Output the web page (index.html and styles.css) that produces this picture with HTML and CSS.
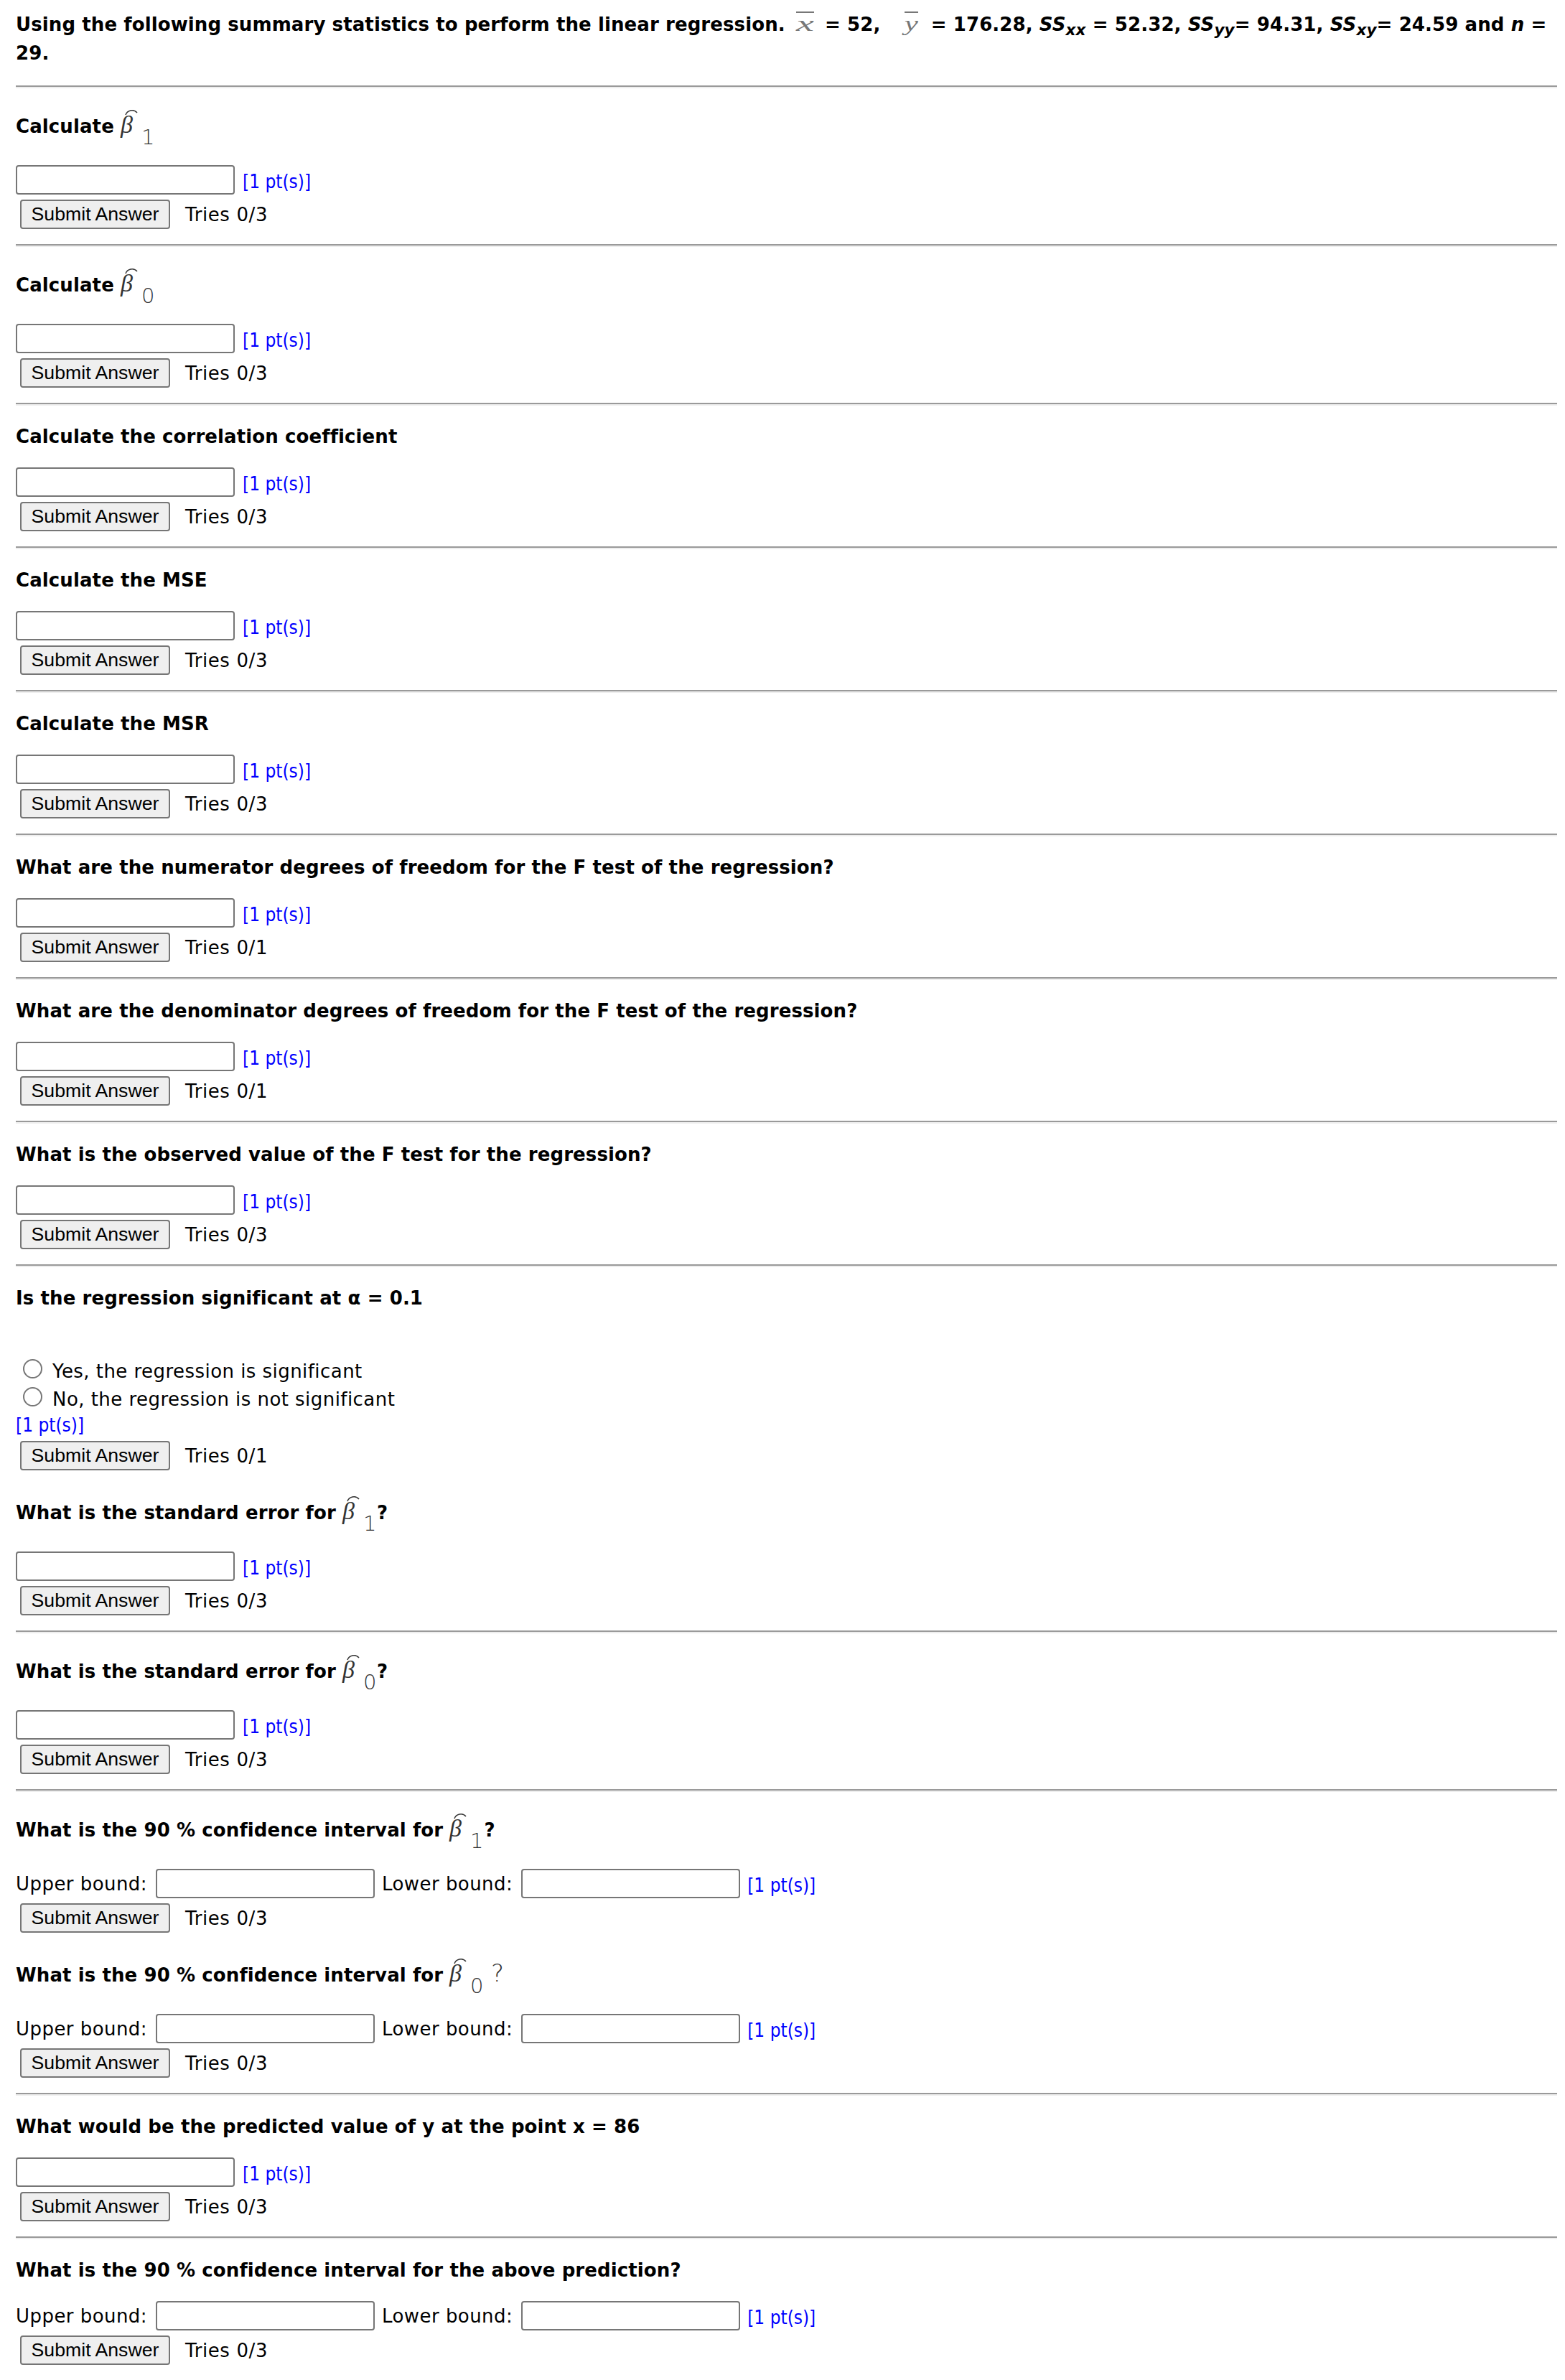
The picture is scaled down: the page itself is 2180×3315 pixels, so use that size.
FILE: index.html
```html
<!DOCTYPE html>
<html lang="en">
<head>
    <meta charset="UTF-8">
    <title>Linear Regression Homework</title>
    <link rel="stylesheet" href="styles.css">
</head>
<body>
<div class="page">
    <p class="intro">Using the following summary statistics to perform the linear regression. <svg class="bar-var" width="37" height="36" viewBox="0 0 37 36"><line x1="6" y1="2" x2="31" y2="2"/><text x="6" y="28" textLength="25" lengthAdjust="spacingAndGlyphs">x</text></svg> = 52, <svg class="bar-var" width="52" height="36" viewBox="0 0 52 36"><line x1="24" y1="2" x2="43" y2="2"/><text x="24" y="28" textLength="19" lengthAdjust="spacingAndGlyphs">y</text></svg> = 176.28, <i>SS</i><sub><i>xx</i></sub> = 52.32, <i>SS</i><sub><i>yy</i></sub>= 94.31, <i>SS</i><sub><i>xy</i></sub>= 24.59 and <i>n</i> = 29.</p>
    <hr>

    <div class="question">
        <p class="prompt">Calculate <svg class="beta" width="48" height="51" viewBox="0 0 48 51"><path d="M7 9 C9 3 18 0 23 6"/><text class="beta-glyph" x="0" y="34">β</text><text class="beta-sub" x="29" y="50">1</text></svg></p>
        <div class="answer"><input type="text"><span class="pts">[1 pt(s)]</span></div>
        <div class="submit"><button>Submit Answer</button><span class="tries">Tries 0/3</span></div>
    </div>
    <hr>

    <div class="question">
        <p class="prompt">Calculate <svg class="beta" width="48" height="51" viewBox="0 0 48 51"><path d="M7 9 C9 3 18 0 23 6"/><text class="beta-glyph" x="0" y="34">β</text><text class="beta-sub" x="29" y="50">0</text></svg></p>
        <div class="answer"><input type="text"><span class="pts">[1 pt(s)]</span></div>
        <div class="submit"><button>Submit Answer</button><span class="tries">Tries 0/3</span></div>
    </div>
    <hr>

    <div class="question">
        <p class="prompt">Calculate the correlation coefficient</p>
        <div class="answer"><input type="text"><span class="pts">[1 pt(s)]</span></div>
        <div class="submit"><button>Submit Answer</button><span class="tries">Tries 0/3</span></div>
    </div>
    <hr>

    <div class="question">
        <p class="prompt">Calculate the MSE</p>
        <div class="answer"><input type="text"><span class="pts">[1 pt(s)]</span></div>
        <div class="submit"><button>Submit Answer</button><span class="tries">Tries 0/3</span></div>
    </div>
    <hr>

    <div class="question">
        <p class="prompt">Calculate the MSR</p>
        <div class="answer"><input type="text"><span class="pts">[1 pt(s)]</span></div>
        <div class="submit"><button>Submit Answer</button><span class="tries">Tries 0/3</span></div>
    </div>
    <hr>

    <div class="question">
        <p class="prompt">What are the numerator degrees of freedom for the F test of the regression?</p>
        <div class="answer"><input type="text"><span class="pts">[1 pt(s)]</span></div>
        <div class="submit"><button>Submit Answer</button><span class="tries">Tries 0/1</span></div>
    </div>
    <hr>

    <div class="question">
        <p class="prompt">What are the denominator degrees of freedom for the F test of the regression?</p>
        <div class="answer"><input type="text"><span class="pts">[1 pt(s)]</span></div>
        <div class="submit"><button>Submit Answer</button><span class="tries">Tries 0/1</span></div>
    </div>
    <hr>

    <div class="question">
        <p class="prompt">What is the observed value of the F test for the regression?</p>
        <div class="answer"><input type="text"><span class="pts">[1 pt(s)]</span></div>
        <div class="submit"><button>Submit Answer</button><span class="tries">Tries 0/3</span></div>
    </div>
    <hr>

    <div class="question open">
        <p class="prompt">Is the regression significant at α = 0.1</p>
        <div class="choices">
            <label class="choice"><input type="radio" name="sig">Yes, the regression is significant</label>
            <label class="choice"><input type="radio" name="sig">No, the regression is not significant</label>
        </div>
        <div class="pts pts-line">[1 pt(s)]</div>
        <div class="submit"><button>Submit Answer</button><span class="tries">Tries 0/1</span></div>
    </div>

    <div class="question">
        <p class="prompt">What is the standard error for <svg class="beta" width="48" height="51" viewBox="0 0 48 51"><path d="M7 9 C9 3 18 0 23 6"/><text class="beta-glyph" x="0" y="34">β</text><text class="beta-sub" x="29" y="50">1</text></svg>?</p>
        <div class="answer"><input type="text"><span class="pts">[1 pt(s)]</span></div>
        <div class="submit"><button>Submit Answer</button><span class="tries">Tries 0/3</span></div>
    </div>
    <hr>

    <div class="question">
        <p class="prompt">What is the standard error for <svg class="beta" width="48" height="51" viewBox="0 0 48 51"><path d="M7 9 C9 3 18 0 23 6"/><text class="beta-glyph" x="0" y="34">β</text><text class="beta-sub" x="29" y="50">0</text></svg>?</p>
        <div class="answer"><input type="text"><span class="pts">[1 pt(s)]</span></div>
        <div class="submit"><button>Submit Answer</button><span class="tries">Tries 0/3</span></div>
    </div>
    <hr>

    <div class="question open">
        <p class="prompt">What is the 90 % confidence interval for <svg class="beta" width="48" height="51" viewBox="0 0 48 51"><path d="M7 9 C9 3 18 0 23 6"/><text class="beta-glyph" x="0" y="34">β</text><text class="beta-sub" x="29" y="50">1</text></svg>?</p>
        <div class="answer bounds">
            <span class="label">Upper bound:</span><input type="text">
            <span class="label">Lower bound:</span><input type="text">
            <span class="pts">[1 pt(s)]</span>
        </div>
        <div class="submit"><button>Submit Answer</button><span class="tries">Tries 0/3</span></div>
    </div>

    <div class="question">
        <p class="prompt">What is the 90 % confidence interval for <svg class="beta" width="80" height="51" viewBox="0 0 80 51"><path d="M7 9 C9 3 18 0 23 6"/><text class="beta-glyph" x="0" y="34">β</text><text class="beta-sub" x="29" y="50">0</text><text class="beta-mark" x="58" y="34">?</text></svg></p>
        <div class="answer bounds">
            <span class="label">Upper bound:</span><input type="text">
            <span class="label">Lower bound:</span><input type="text">
            <span class="pts">[1 pt(s)]</span>
        </div>
        <div class="submit"><button>Submit Answer</button><span class="tries">Tries 0/3</span></div>
    </div>
    <hr>

    <div class="question">
        <p class="prompt">What would be the predicted value of y at the point x = 86</p>
        <div class="answer"><input type="text"><span class="pts">[1 pt(s)]</span></div>
        <div class="submit"><button>Submit Answer</button><span class="tries">Tries 0/3</span></div>
    </div>
    <hr>

    <div class="question">
        <p class="prompt">What is the 90 % confidence interval for the above prediction?</p>
        <div class="answer bounds">
            <span class="label">Upper bound:</span><input type="text">
            <span class="label">Lower bound:</span><input type="text">
            <span class="pts">[1 pt(s)]</span>
        </div>
        <div class="submit"><button>Submit Answer</button><span class="tries">Tries 0/3</span></div>
    </div>
</div>
</body>
</html>
```

FILE: styles.css
```css
body {
    margin: 0;
    font-family: "DejaVu Sans", Verdana, sans-serif;
    font-size: 26px;
    color: #000;
    background: #fff;
}
.page {
    padding: 14px 11px 0 22px;
}
.intro {
    margin: 0 0 25px;
    font-weight: bold;
    letter-spacing: 0.1px;
    line-height: 40px;
}
.intro sub {
    font-size: 0.83em;
    line-height: 0;
}
.bar-var {
    vertical-align: -8px;
}
.bar-var line {
    stroke: #777;
    stroke-width: 2;
}
.bar-var text {
    font-family: "Liberation Serif", serif;
    font-style: italic;
    font-weight: normal;
    font-size: 30px;
    fill: #777;
}
hr {
    margin: 0;
    height: 0;
    border: 0;
    border-top: 2px solid #9a9a9a;
    border-bottom: 2px solid #eee;
}
.question {
    padding: 28px 0 21px;
}
.question.open {
    padding-bottom: 6px;
}
.prompt {
    margin: 0 0 28px;
    font-weight: bold;
    letter-spacing: 0.1px;
    line-height: 30px;
}
.beta {
    overflow: visible;
    vertical-align: -17px;
}
.beta path {
    fill: none;
    stroke: #333;
    stroke-width: 1.5;
}
.beta-glyph {
    font-family: "Liberation Serif", serif;
    font-style: italic;
    font-weight: normal;
    font-size: 34px;
    letter-spacing: 0;
    fill: #333;
}
.beta-sub, .beta-mark {
    font-family: "DejaVu Sans", sans-serif;
    font-weight: 200;
    font-size: 29px;
    letter-spacing: 0;
    fill: #333;
}
.beta-mark {
    font-size: 34px;
}
.answer {
    display: flex;
    align-items: center;
    height: 41px;
}
input[type="text"] {
    width: 305px;
    height: 41px;
    box-sizing: border-box;
    margin: 0;
    padding: 0 4px;
    border: 2px solid #767676;
    border-radius: 4px;
    background: #fff;
    font: inherit;
}
.pts {
    margin-left: 11px;
    padding-top: 4px;
    color: #00f;
    font-family: "DejaVu Sans Condensed", "DejaVu Sans", sans-serif;
    font-stretch: condensed;
    line-height: 30px;
}
.bounds .label {
    letter-spacing: 0.45px;
    line-height: 30px;
}
.bounds input[type="text"] {
    margin: 0 10px 0 12px;
}
.bounds .pts {
    margin-left: 0;
}
.submit {
    display: flex;
    align-items: center;
    height: 41px;
    margin-top: 7px;
}
button {
    width: 209px;
    height: 41px;
    box-sizing: border-box;
    margin: 0 0 0 6px;
    padding: 0;
    border: 2px solid #767676;
    border-radius: 4px;
    background: #efefef;
    color: #000;
    font-family: "Liberation Sans", Arial, sans-serif;
    font-size: 26.67px;
}
.tries {
    margin-left: 21px;
    letter-spacing: 0.6px;
    line-height: 30px;
}
.choices {
    margin-top: 67px;
}
.choice {
    display: flex;
    align-items: center;
    height: 39px;
    letter-spacing: 0.45px;
    line-height: 30px;
}
.choice input {
    appearance: none;
    width: 27px;
    height: 27px;
    box-sizing: border-box;
    margin: 0 14px 6px 10px;
    border: 2px solid #767676;
    border-radius: 50%;
    background: #fff;
}
.pts-line {
    margin: 2px 0 1px;
    padding-top: 0;
    margin-left: 0;
}
```
